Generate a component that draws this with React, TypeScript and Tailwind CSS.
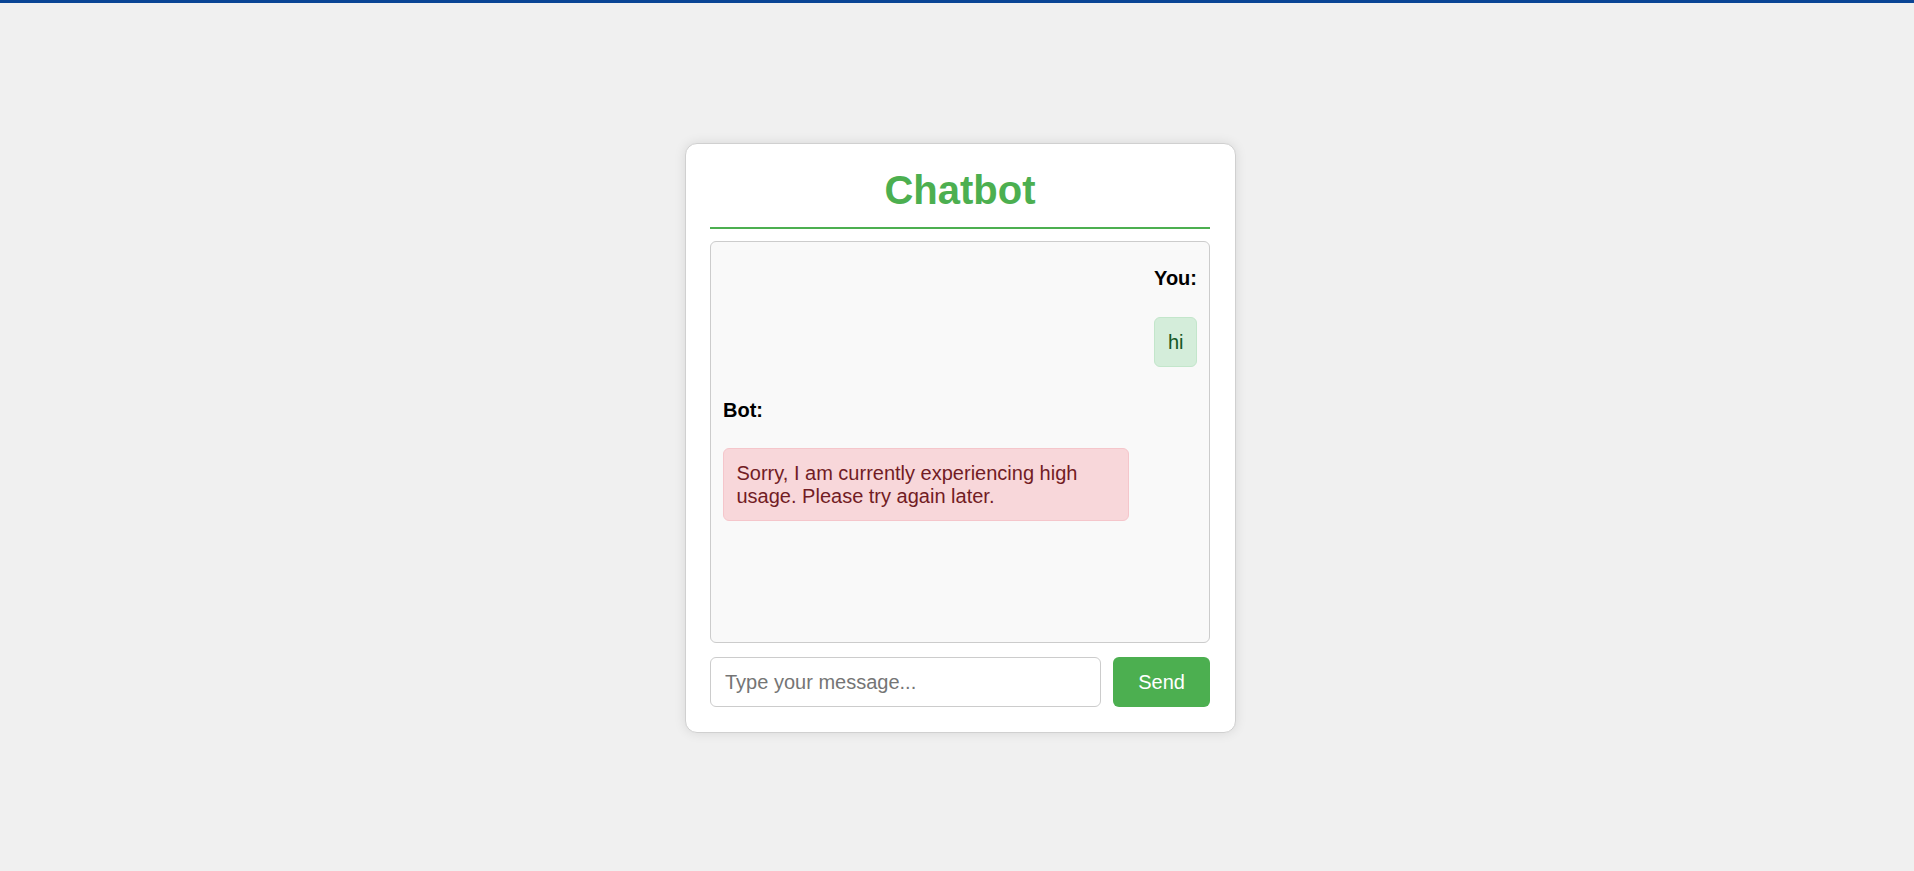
import React from "react";

export default function App() {
  return (
    <div
      className="min-h-screen flex flex-col bg-[#f0f0f0]"
      style={{ fontFamily: '"Liberation Sans", Arial, sans-serif' }}
    >
      <div className="h-[3px] bg-[#0a4595] shrink-0" />
      <div className="flex-1 flex items-center justify-center pl-[7px] pt-[2px]">
        <div className="w-[551px] bg-white border border-[#d0d0d0] rounded-[12px] shadow-[0_0_12px_rgba(0,0,0,0.1)] pl-[24px] pr-[25px] pt-[23px] pb-[25px]">
          <h1 className="text-[40px] leading-[46px] font-bold text-[#4caf50] text-center pb-[14px] border-b-2 border-[#4caf50] mb-[12px]">
            Chatbot
          </h1>
          <div className="h-[402px] bg-[#f9f9f9] border border-[#cccccc] rounded-[6px] p-[12px] flex flex-col overflow-hidden text-[20px] leading-[23px]">
            <div className="mt-[13px] text-right font-bold text-black">You:</div>
            <div className="mt-[27px] self-end bg-[#d4edda] border border-[#c3e6cb] text-[#155724] rounded-[6px] p-[12.5px]">
              hi
            </div>
            <div className="mt-[32px] font-bold text-black">Bot:</div>
            <div className="mt-[26px] self-start max-w-[406px] bg-[#f8d7da] border border-[#f5c6cb] text-[#721c24] rounded-[6px] p-[12.5px]">
              Sorry, I am currently experiencing high usage. Please try again later.
            </div>
          </div>
          <div className="mt-[14px] flex gap-[12px]">
            <input
              type="text"
              placeholder="Type your message..."
              className="flex-1 min-w-0 h-[50px] border border-[#cccccc] rounded-[6px] px-[14px] text-[20px] text-black bg-white outline-none placeholder:text-[#757575]"
            />
            <button className="h-[50px] px-[25px] bg-[#4caf50] text-white text-[20px] rounded-[6px]">
              Send
            </button>
          </div>
        </div>
      </div>
    </div>
  );
}
